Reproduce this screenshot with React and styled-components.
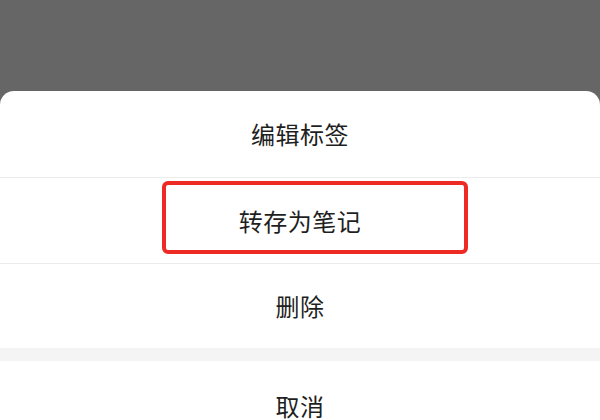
import React from "react";
import styled, { createGlobalStyle } from "styled-components";

const Global = createGlobalStyle`
  html, body { margin: 0; padding: 0; }
  body {
    width: 600px;
    height: 420px;
    overflow: hidden;
    background: #666666;
    font-family: "Noto Sans CJK SC", "Noto Sans", sans-serif;
  }
`;

const Screen = styled.div`
  width: 600px;
  height: 420px;
  display: flex;
  flex-direction: column;
  justify-content: flex-end;
  background: #666666;
  overflow: hidden;
`;

const Sheet = styled.div`
  margin-top: 91px;
  flex: 1;
  display: flex;
  flex-direction: column;
  background: #ffffff;
  border-radius: 14px 14px 0 0;
  overflow: hidden;
`;

const Item = styled.div`
  flex: none;
  height: ${(p) => p.$h || 85}px;
  display: flex;
  align-items: center;
  justify-content: center;
  border-top: ${(p) => (p.$divider ? "1px solid #ececec" : "none")};
  position: relative;
`;

const Label = styled.span`
  font-size: 24px;
  color: #1f1f1f;
  letter-spacing: 0.5px;
  line-height: 1;
`;

const Highlight = styled.div`
  position: absolute;
  left: 162px;
  top: 3px;
  width: 306px;
  height: 73px;
  box-sizing: border-box;
  border: 4px solid #ee2a24;
  border-radius: 6px;
`;

const Gap = styled.div`
  flex: none;
  height: 13px;
  background: #f4f4f4;
`;

export default function App() {
  return (
    <Screen>
      <Global />
      <Sheet>
        <Item $h={86}>
          <Label>编辑标签</Label>
        </Item>
        <Item $divider>
          <Highlight />
          <Label>转存为笔记</Label>
        </Item>
        <Item $divider $h={84}>
          <Label>删除</Label>
        </Item>
        <Gap />
        <Item $h={90}>
          <Label>取消</Label>
        </Item>
      </Sheet>
    </Screen>
  );
}
